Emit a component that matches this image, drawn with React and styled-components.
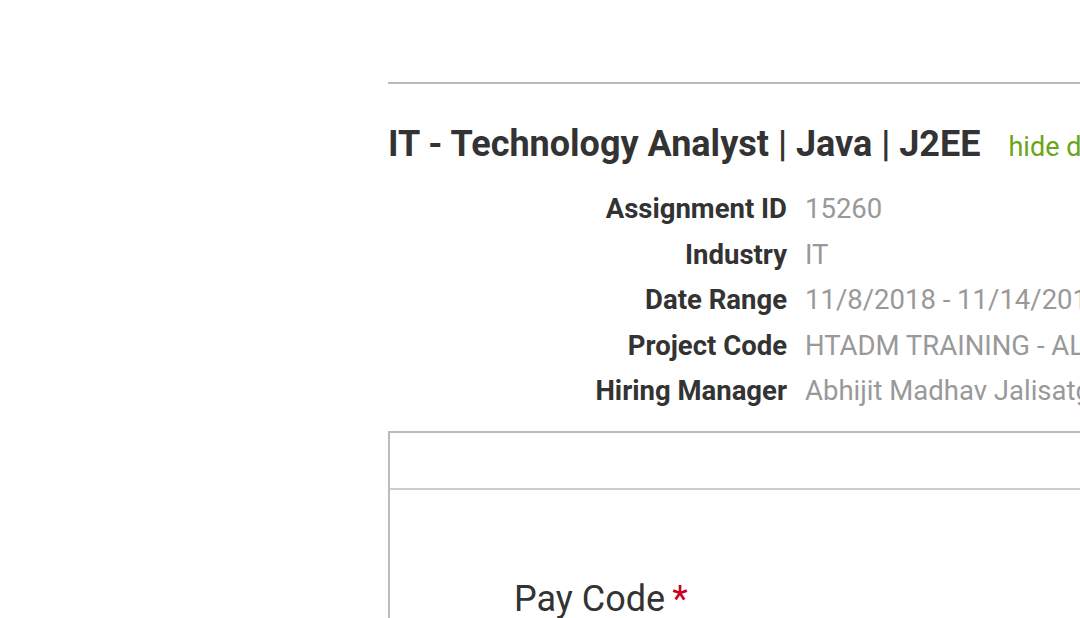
import styled, { createGlobalStyle } from "styled-components";

const GlobalStyle = createGlobalStyle`
    html, body {
        margin: 0;
        padding: 0;
        background: #fff;
        overflow: hidden;
        font-family: Roboto, "Liberation Sans", sans-serif;
    }
`;

const Page = styled.div`
    width: 1080px;
    height: 618px;
    overflow: hidden;
    padding: 82px 0 0 388px;
    box-sizing: border-box;
`;

const Content = styled.div`
    width: 1100px;
    border-top: 2px solid #bbb;
`;

const Header = styled.div`
    display: flex;
    align-items: baseline;
    gap: 28px;
    margin-top: 40px;
    white-space: nowrap;
`;

const Title = styled.h1`
    margin: 0;
    font-size: 36px;
    font-weight: 700;
    color: #333;
    line-height: 40px;
`;

const ToggleLink = styled.a`
    font-size: 27px;
    color: #6aa517;
    text-decoration: none;
    cursor: pointer;
`;

const Details = styled.dl`
    display: grid;
    grid-template-columns: 399px auto;
    column-gap: 18px;
    grid-auto-rows: 45.5px;
    align-items: center;
    margin: 22px 0 0;
    white-space: nowrap;
`;

const Label = styled.dt`
    text-align: right;
    font-size: 27.5px;
    font-weight: 700;
    color: #333;
`;

const Value = styled.dd`
    margin: 0;
    font-size: 27.5px;
    color: #999;
`;

const Panel = styled.section`
    margin-top: 17px;
    border: 2px solid #bbb;
    border-right: none;
    border-bottom: none;
`;

const PanelHead = styled.div`
    height: 55px;
    border-bottom: 2px solid #ccc;
`;

const PanelBody = styled.div`
    padding: 88px 0 0 124px;
`;

const FieldLabel = styled.label`
    font-size: 36px;
    color: #333;
`;

const Required = styled.span`
    color: #c8001e;
    margin-left: 7px;
`;

const rows = [
    ["Assignment ID", "15260"],
    ["Industry", "IT"],
    ["Date Range", "11/8/2018 - 11/14/2018"],
    ["Project Code", "HTADM TRAINING - ALL"],
    ["Hiring Manager", "Abhijit Madhav Jalisatgi"],
];

function App() {
    return (
        <>
            <GlobalStyle />
            <Page>
                <Content>
                    <Header>
                        <Title>IT - Technology Analyst | Java | J2EE</Title>
                        <ToggleLink>hide details</ToggleLink>
                    </Header>
                    <Details>
                        {rows.map(([label, value]) => (
                            <div key={label} style={{ display: "contents" }}>
                                <Label>{label}</Label>
                                <Value>{value}</Value>
                            </div>
                        ))}
                    </Details>
                    <Panel>
                        <PanelHead />
                        <PanelBody>
                            <FieldLabel>
                                Pay Code<Required>*</Required>
                            </FieldLabel>
                        </PanelBody>
                    </Panel>
                </Content>
            </Page>
        </>
    );
}

export default App;
